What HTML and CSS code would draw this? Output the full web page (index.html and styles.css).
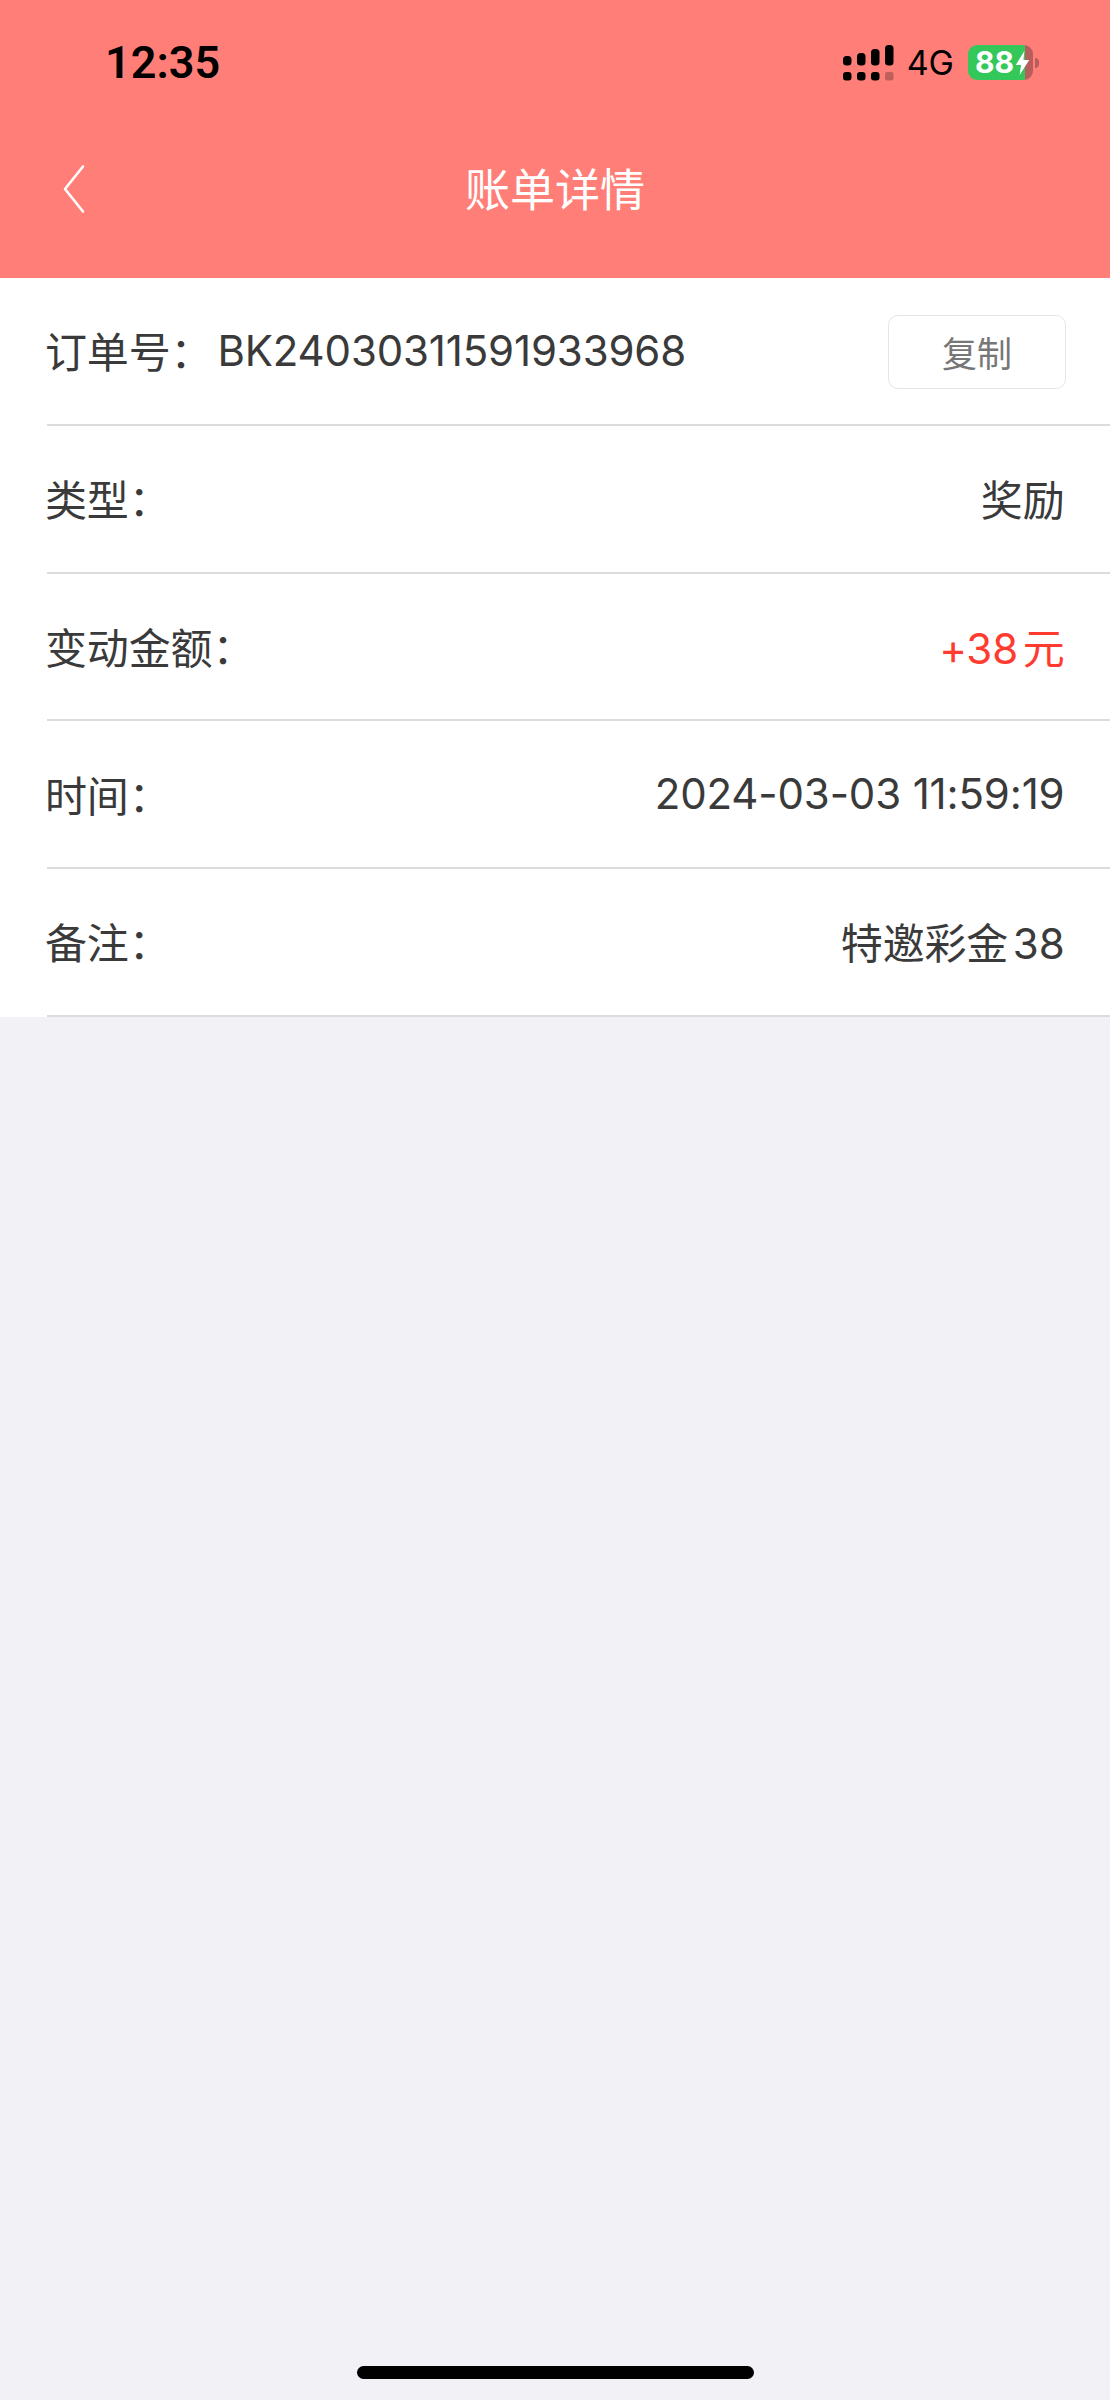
FILE: index.html
```html
<!DOCTYPE html>
<html lang="zh-CN">
<head>
    <meta charset="UTF-8">
    <meta name="viewport" content="width=device-width, initial-scale=1.0">
    <title>账单详情</title>
    <link rel="stylesheet" href="styles.css">
</head>
<body>
    <div class="page">
        <header class="header">
            <div class="status-bar">
                <span class="time">12:35</span>
                <div class="status-right">
                    <svg class="signal" width="51" height="36" viewBox="0 0 51 36">
                        <rect x="0" y="11" width="8.5" height="9.5" rx="3.5"/>
                        <rect x="14" y="8" width="8.5" height="12.5" rx="3.5"/>
                        <rect x="28" y="4" width="8.5" height="16.5" rx="3.5"/>
                        <rect x="42" y="0" width="8.5" height="20.5" rx="3.5"/>
                        <rect x="0" y="27" width="8.5" height="8.5" rx="3"/>
                        <rect x="14" y="27" width="8.5" height="8.5" rx="3"/>
                        <rect x="28" y="27" width="8.5" height="8.5" rx="3"/>
                        <rect x="42" y="27" width="8.5" height="8.5" rx="2" opacity="0.25"/>
                    </svg>
                    <span class="network">4G</span>
                    <div class="battery">
                        <div class="battery-body">
                            <span class="battery-level">88</span>
                            <svg class="bolt" width="15" height="24" viewBox="0 0 15 25">
                                <path d="M9.5 0 L0.5 14.5 H6 L4.5 25 L14.5 9.5 H8.5 Z"/>
                            </svg>
                        </div>
                        <div class="battery-tip"></div>
                    </div>
                </div>
            </div>
            <nav class="nav-bar">
                <div class="nav-back">
                    <svg width="22" height="50" viewBox="0 0 22 50">
                        <path d="M20 2.5 L2 25 L20 47.5" fill="none" stroke="#fff" stroke-width="2.6" stroke-linecap="round" stroke-linejoin="round"/>
                    </svg>
                </div>
                <h1 class="nav-title">账单详情</h1>
            </nav>
        </header>

        <main class="detail-list">
            <div class="detail-row">
                <div class="order-info">
                    <span class="label">订单号：</span>
                    <span class="order-no">BK24030311591933968</span>
                </div>
                <button class="copy-button">复制</button>
            </div>
            <div class="detail-row">
                <span class="label">类型：</span>
                <span class="value">奖励</span>
            </div>
            <div class="detail-row">
                <span class="label">变动金额：</span>
                <span class="value amount tight">+38 元</span>
            </div>
            <div class="detail-row">
                <span class="label">时间：</span>
                <span class="value">2024-03-03 11:59:19</span>
            </div>
            <div class="detail-row">
                <span class="label">备注：</span>
                <span class="value tight">特邀彩金 38</span>
            </div>
        </main>

        <div class="home-indicator"></div>
    </div>
</body>
</html>
```

FILE: styles.css
```css
body {
    margin: 0;
    background-color: #f1f1f6;
    font-family: Inter, "Noto Sans CJK SC", sans-serif;
    color: #3a3a3a;
}
.page {
    display: flex;
    flex-direction: column;
    min-height: 100vh;
    box-sizing: border-box;
}
.header {
    background-color: #ff7f78;
    height: 278px;
}
.status-bar {
    display: flex;
    justify-content: space-between;
    align-items: flex-start;
    height: 100px;
    padding: 45px 71px 0 105px;
    box-sizing: border-box;
    color: #000;
}
.time {
    font-family: Roboto, sans-serif;
    font-size: 45px;
    font-weight: 600;
    line-height: 36px;
}
.status-right {
    display: flex;
    align-items: flex-start;
}
.network {
    font-size: 34px;
    line-height: 36px;
    margin-left: 13px;
}
.battery {
    display: flex;
    align-items: center;
    margin-left: 14px;
}
.battery-body {
    display: flex;
    align-items: center;
    width: 65px;
    height: 35px;
    padding-left: 7px;
    box-sizing: border-box;
    border-radius: 9px;
    background: linear-gradient(to right, #34c759 0, #34c759 57px, #b85c5c 57px);
    color: #fff;
}
.battery-level {
    font-size: 30px;
    font-weight: 700;
    line-height: 35px;
}
.bolt {
    flex-shrink: 0;
    fill: #fff;
    margin-left: 1px;
}
.battery-tip {
    width: 4px;
    height: 10px;
    margin-left: 2px;
    border-radius: 0 5px 5px 0;
    background-color: #b85c5c;
}
.nav-bar {
    display: grid;
    grid-template-columns: 1fr auto 1fr;
    align-items: center;
    height: 178px;
    padding-left: 63px;
}
.nav-back {
    display: flex;
}
.nav-title {
    margin: 0 0 3px -63px;
    color: #fff;
    font-size: 45px;
    font-weight: 400;
}
.detail-list {
    background-color: #fff;
}
.detail-row {
    display: flex;
    justify-content: space-between;
    align-items: center;
    height: 147.75px;
    box-sizing: border-box;
    margin-left: 47px;
    padding: 0 44px 2px 0;
    border-bottom: 2px solid #dcdcdc;
    font-size: 42px;
    letter-spacing: -0.15px;
}
.order-info {
    display: flex;
    align-items: center;
}
.label {
    margin-left: -2px;
    color: #3a3a3a;
}
.value {
    margin-right: 1.5px;
}
.order-no {
    margin: 2px 0 0 5px;
}
.tight {
    word-spacing: -7px;
}
.amount {
    color: #ff3b30;
}
.copy-button {
    width: 178px;
    height: 74px;
    margin-top: 4px;
    padding: 0;
    border: 1.5px solid #e5e5e5;
    border-radius: 10px;
    background-color: #fff;
    color: #777;
    font-family: inherit;
    font-size: 35px;
}
.home-indicator {
    align-self: center;
    width: 397px;
    height: 13px;
    margin-top: auto;
    margin-bottom: 21px;
    border-radius: 7px;
    background-color: #000;
}
```
